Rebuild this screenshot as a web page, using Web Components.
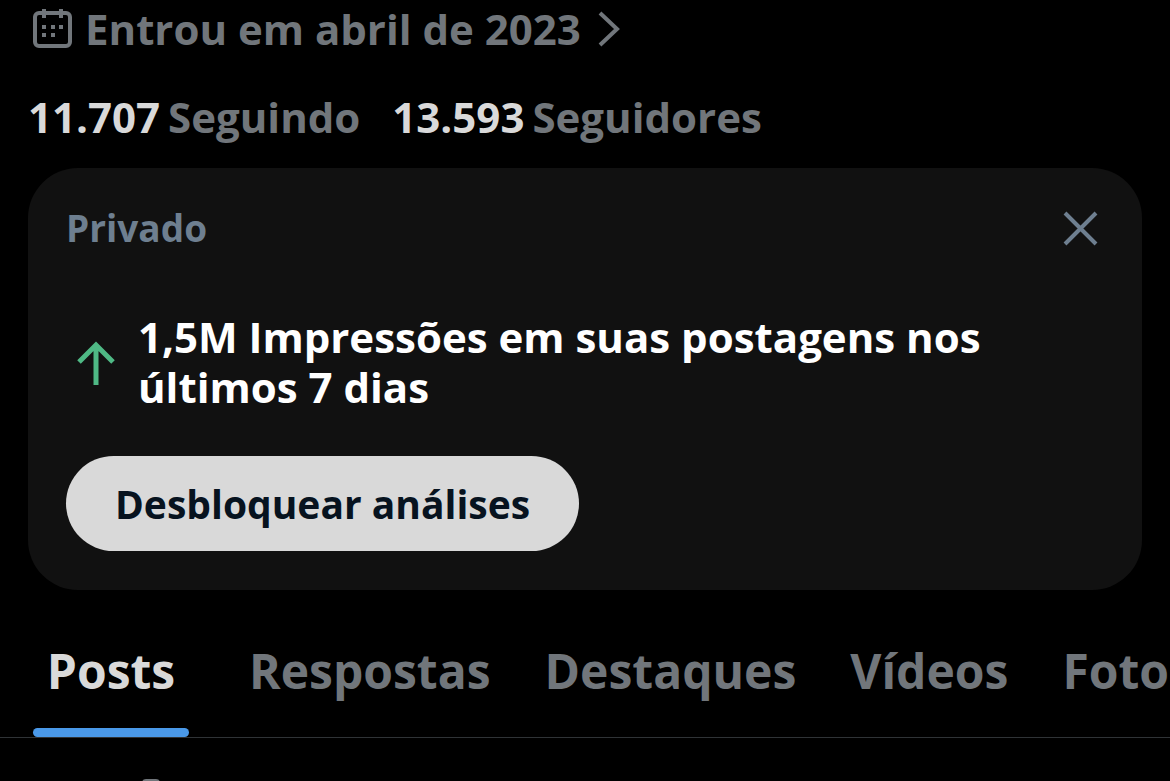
<!DOCTYPE html>
<html lang="pt-BR">
<head>
<meta charset="UTF-8">
<meta name="viewport" content="width=device-width, initial-scale=1">
<title>Perfil</title>
<style>
    body {
        margin: 0;
        background: #000;
        font-family: 'Open Sans', 'Noto Sans', sans-serif;
        font-weight: 700;
    }
</style>
</head>
<body>
<profile-page>
    <profile-joined slot="header">Entrou em abril de 2023</profile-joined>
    <profile-stats slot="header">
        <profile-stat value="11.707">Seguindo</profile-stat>
        <profile-stat value="13.593">Seguidores</profile-stat>
    </profile-stats>
    <insight-card slot="header" label="Privado" action="Desbloquear análises">1,5M Impressões em suas postagens nos últimos 7 dias</insight-card>
    <profile-tabs slot="tabs">
        <profile-tab active>Posts</profile-tab>
        <profile-tab>Respostas</profile-tab>
        <profile-tab>Destaques</profile-tab>
        <profile-tab>Vídeos</profile-tab>
        <profile-tab>Foto</profile-tab>
    </profile-tabs>
    <post-context slot="feed"></post-context>
</profile-page>

<script>
class ProfilePage extends HTMLElement {
    constructor() {
        super();
        const shadow = this.attachShadow({ mode: 'open' });
        shadow.innerHTML = `
            <style>
                :host {
                    --muted: #71767b;
                    --bright: #d9d9d9;
                    display: flex;
                    flex-direction: column;
                    height: 100vh;
                    overflow: hidden;
                    color: var(--muted);
                }

                header {
                    flex: none;
                    padding: 0 28px;
                }

                main {
                    flex: 1;
                    min-height: 0;
                    overflow: hidden;
                }
            </style>
            <header><slot name="header"></slot></header>
            <slot name="tabs"></slot>
            <main><slot name="feed"></slot></main>
        `;
    }
}

class ProfileJoined extends HTMLElement {
    constructor() {
        super();
        const shadow = this.attachShadow({ mode: 'open' });
        shadow.innerHTML = `
            <style>
                :host {
                    display: block;
                    padding-left: 4px;
                }

                a {
                    display: inline-flex;
                    align-items: center;
                    height: 58px;
                    color: inherit;
                    text-decoration: none;
                    font-size: 42px;
                    line-height: 58px;
                }

                svg {
                    display: block;
                    flex: none;
                    fill: none;
                    stroke: currentColor;
                }

                .calendar {
                    margin-right: 12px;
                }

                .chevron {
                    margin-left: 16px;
                }
            </style>
            <a href="#">
                <svg class="calendar" width="41" height="40" viewBox="0 0 41 40" aria-hidden="true">
                    <rect x="3" y="4" width="35" height="33" rx="4" stroke-width="4"/>
                    <path d="M12 0v9M29 0v9" stroke-width="4"/>
                    <path d="M10 18h4m5 0h4m4 0h4M10 26h4m5 0h4" stroke-width="4"/>
                </svg>
                <slot></slot>
                <svg class="chevron" width="24" height="36" viewBox="0 0 24 36" aria-hidden="true">
                    <path d="M3 2l17 16L3 34" stroke-width="4"/>
                </svg>
            </a>
        `;
    }
}

class ProfileStats extends HTMLElement {
    constructor() {
        super();
        const shadow = this.attachShadow({ mode: 'open' });
        shadow.innerHTML = `
            <style>
                :host {
                    display: flex;
                    gap: 32px;
                    padding: 30px 0 22px;
                    font-size: 42px;
                    line-height: 58px;
                }
            </style>
            <slot></slot>
        `;
    }
}

class ProfileStat extends HTMLElement {
    constructor() {
        super();
        const shadow = this.attachShadow({ mode: 'open' });
        const value = this.getAttribute('value') || '0';
        shadow.innerHTML = `
            <style>
                :host {
                    display: block;
                }

                a {
                    display: flex;
                    gap: 8px;
                    color: inherit;
                    text-decoration: none;
                    white-space: nowrap;
                }

                b {
                    color: var(--bright);
                    font-weight: inherit;
                }
            </style>
            <a href="#"><b>${value}</b><span><slot></slot></span></a>
        `;
    }
}

class InsightCard extends HTMLElement {
    constructor() {
        super();
        const shadow = this.attachShadow({ mode: 'open' });
        const label = this.getAttribute('label') || '';
        const action = this.getAttribute('action') || '';
        shadow.innerHTML = `
            <style>
                :host {
                    display: block;
                    padding: 36px 38px 39px;
                    border-radius: 50px;
                    background: #111;
                }

                .top {
                    display: flex;
                    align-items: center;
                    justify-content: space-between;
                    height: 48px;
                    color: #6e7f90;
                    font-size: 37px;
                    line-height: 48px;
                }

                button {
                    border: none;
                    font: inherit;
                    cursor: pointer;
                }

                .close {
                    display: block;
                    padding: 6px;
                    background: none;
                    color: inherit;
                }

                svg {
                    display: block;
                    flex: none;
                    fill: none;
                    stroke: currentColor;
                }

                .message {
                    display: flex;
                    align-items: center;
                    gap: 22px;
                    margin: 60px 0 44px;
                    padding-left: 10px;
                    color: #fff;
                    font-size: 42px;
                    line-height: 50px;
                }

                .message svg {
                    color: #4fb985;
                }

                p {
                    margin: 0;
                    max-width: 880px;
                }

                .action {
                    height: 95px;
                    padding: 0 49px;
                    border-radius: 48px;
                    background: var(--bright);
                    color: #07131f;
                    font-size: 39px;
                    line-height: 48px;
                }
            </style>
            <div class="top">
                <span>${label}</span>
                <button class="close" type="button" aria-label="Fechar">
                    <svg width="36" height="36" viewBox="0 0 36 36" aria-hidden="true">
                        <path d="M3 3l31 31M34 3L3 34" stroke-width="4"/>
                    </svg>
                </button>
            </div>
            <div class="message">
                <svg width="40" height="46" viewBox="0 0 40 46" aria-hidden="true">
                    <path d="M20 46V6M3 23L20 6l17 17" stroke-width="5"/>
                </svg>
                <p><slot></slot></p>
            </div>
            <button class="action" type="button">${action}</button>
        `;
    }
}

class ProfileTabs extends HTMLElement {
    constructor() {
        super();
        const shadow = this.attachShadow({ mode: 'open' });
        shadow.innerHTML = `
            <style>
                :host {
                    display: block;
                    flex: none;
                    margin-top: 34px;
                    border-bottom: 1px solid #2f3336;
                    overflow: hidden;
                }

                nav {
                    display: flex;
                }
            </style>
            <nav><slot></slot></nav>
        `;
    }
}

class ProfileTab extends HTMLElement {
    constructor() {
        super();
        const shadow = this.attachShadow({ mode: 'open' });
        shadow.innerHTML = `
            <style>
                :host {
                    display: block;
                    flex: none;
                }

                button {
                    display: flex;
                    flex-direction: column;
                    align-items: center;
                    width: 100%;
                    padding: 12px 27px 0;
                    border: none;
                    background: none;
                    color: inherit;
                    font: inherit;
                    font-size: 48px;
                    line-height: 70px;
                    cursor: pointer;
                }

                .bar {
                    height: 9px;
                    margin-top: 22px;
                    border-radius: 5px;
                }

                :host([active]) {
                    color: var(--bright);
                }

                :host([active]) button {
                    padding: 12px 33px 0;
                }

                :host([active]) .bar {
                    width: 156px;
                    background: #4a99e9;
                }
            </style>
            <button type="button"><span><slot></slot></span><span class="bar"></span></button>
        `;
    }
}

class PostContext extends HTMLElement {
    constructor() {
        super();
        const shadow = this.attachShadow({ mode: 'open' });
        shadow.innerHTML = `
            <style>
                :host {
                    display: block;
                    padding: 41px 0 0 135px;
                }

                svg {
                    display: block;
                    fill: currentColor;
                }
            </style>
            <svg width="32" height="36" viewBox="0 0 32 36" aria-hidden="true">
                <path d="M11 0h10q4 0 4 4v11l5 7v3H18v9l-2 2-2-2v-9H2v-3l5-7V4q0-4 4-4z"/>
            </svg>
        `;
    }
}

customElements.define('profile-page', ProfilePage);
customElements.define('profile-joined', ProfileJoined);
customElements.define('profile-stats', ProfileStats);
customElements.define('profile-stat', ProfileStat);
customElements.define('insight-card', InsightCard);
customElements.define('profile-tabs', ProfileTabs);
customElements.define('profile-tab', ProfileTab);
customElements.define('post-context', PostContext);
</script>
</body>
</html>
